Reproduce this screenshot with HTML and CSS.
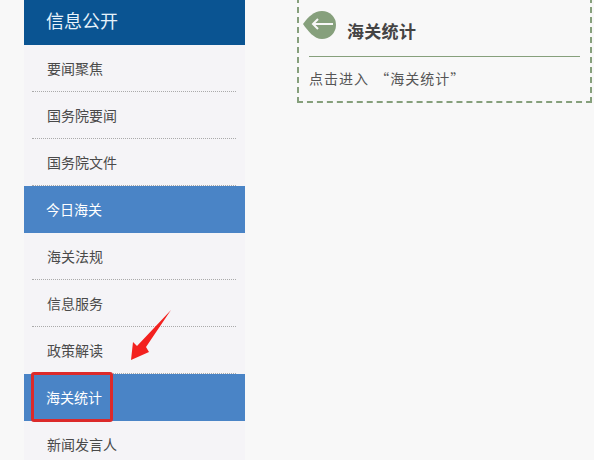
FILE: index.html
```html
<!DOCTYPE html>
<html lang="zh">
<head>
<meta charset="utf-8">
<title>海关统计</title>
<link rel="stylesheet" href="styles.css">
</head>
<body>
<div class="page">
  <aside class="side">
    <h2 class="side-title">信息公开</h2>
    <ul class="menu">
      <li class="item">要闻聚焦</li>
      <li class="item">国务院要闻</li>
      <li class="item">国务院文件</li>
      <li class="item active">今日海关</li>
      <li class="item">海关法规</li>
      <li class="item">信息服务</li>
      <li class="item">政策解读</li>
      <li class="item active">海关统计</li>
      <li class="item">新闻发言人</li>
    </ul>
  </aside>
  <main class="content">
    <section class="card">
      <div class="card-head">
        <svg class="back" width="35" height="30" viewBox="0 0 35 30"><path fill="#86a07c" d="M0 14 C5 7 11 1 19 1 a14 14 0 0 1 0 28 C11 29 5 21 0 14Z"/><path fill="none" stroke="#f7f7f7" stroke-width="2" d="M30 14H10M15 9l-5 5 5 5"/></svg>
        <h3 class="card-title">海关统计</h3>
      </div>
      <p class="card-text">点击进入 “海关统计”</p>
    </section>
  </main>
</div>
<div class="mark"></div>
<svg class="arrow" width="44" height="56" viewBox="0 0 44 56"><path fill="#f3211f" d="M41 1 L16 38 L19 43 L1 51 L3 33 L7 37Z"/></svg>
</body>
</html>
```
FILE: styles.css
```css
html, body { margin: 0; padding: 0; }
body {
  width: 594px; height: 460px; overflow: hidden; position: relative;
  background: #f8f8f8;
  font-family: "Liberation Sans", "Noto Sans CJK SC", sans-serif;
}
.page { display: flex; align-items: flex-start; padding-left: 24px; }
.side { width: 221px; flex: none; background: #f5f4f7; }
.side-title {
  margin: 0; height: 45px; line-height: 44px; padding-left: 22px;
  background: #0a5492; color: #e6f2fb;
  font-size: 18px; font-weight: 400;
}
.menu { list-style: none; margin: 0; padding: 0; }
.item {
  height: 47px; line-height: 47px; padding: 1px 0 0 23px;
  font-size: 14px; color: #4a4a4a;
  position: relative; box-sizing: border-box;
}
.item::after {
  content: ""; position: absolute; left: 8px; right: 9px; bottom: 0;
  border-bottom: 1px dotted #aaa;
}
.item.active { background: #4a84c6; color: #fff; padding-left: 22px; }
.item.active::after { display: none; }
.content { margin-left: 52px; width: 295px; flex: none; }
.card {
  box-sizing: border-box; height: 106px; margin-top: -3px;
  border: 2px dashed #86a07c; padding: 13px 10px 0 10px;
}
.card-head {
  display: flex; align-items: flex-start; gap: 9px;
  height: 44px; border-bottom: 1px solid #86a07c;
}
.back { margin-left: -6px; flex: none; margin-top: -2px; }
.card-title { margin: 10px 0 0; font-size: 17px; font-weight: 700; color: #444; line-height: 22px; letter-spacing: .3px; }
.card-text {
  margin: 12px 0 0; font-size: 14px; color: #555; line-height: 18px; letter-spacing: 1px; word-spacing: 2px;
  font-family: "Noto Sans CJK SC", sans-serif;
}
.mark {
  position: absolute; left: 31px; top: 372px; width: 76px; height: 44px;
  border: 3px solid #dc2a2a; border-radius: 3px;
}
.arrow { position: absolute; left: 130px; top: 309px; }
```
